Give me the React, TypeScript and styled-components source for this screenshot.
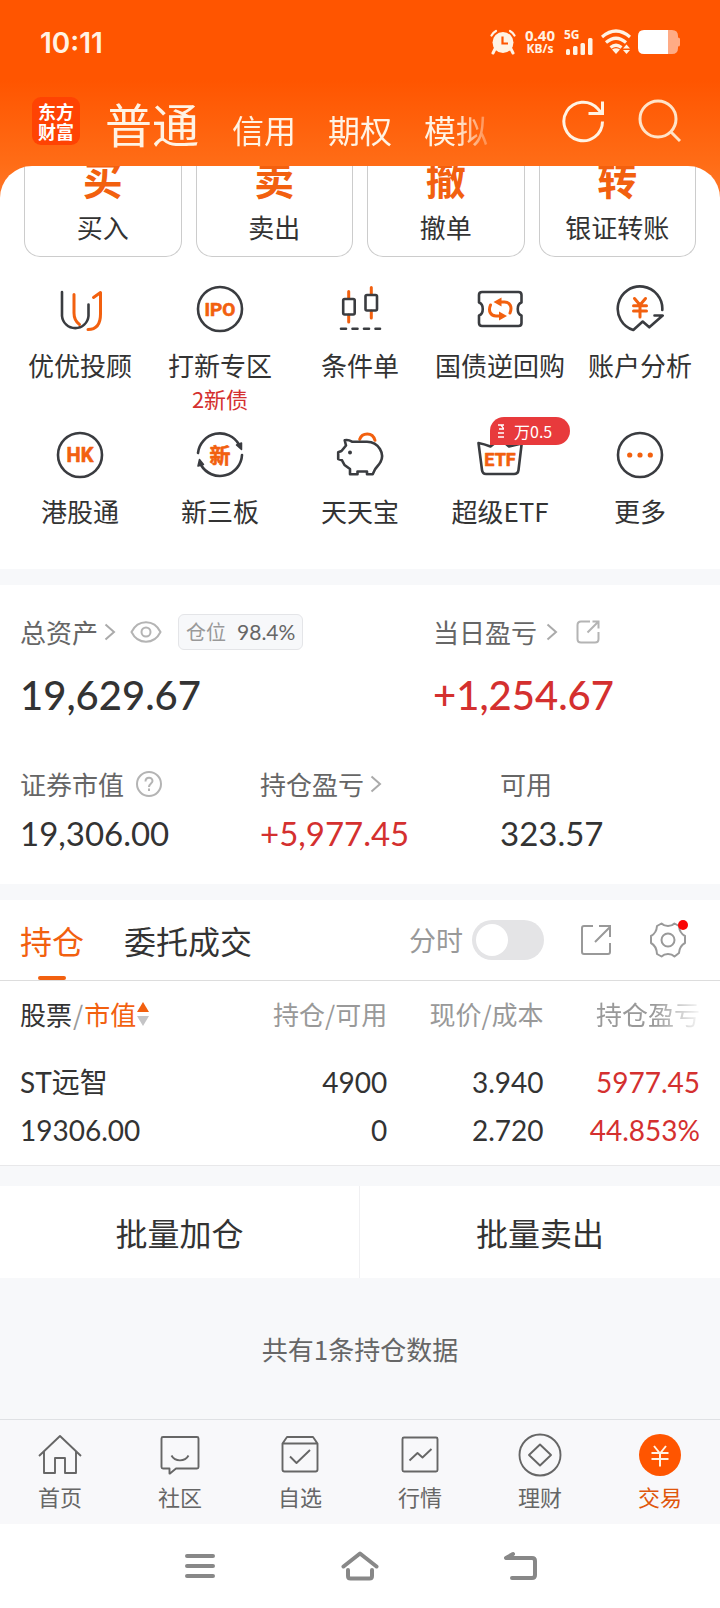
import React from "react";
import styled, { createGlobalStyle } from "styled-components";

const CJK = `"Noto Sans CJK SC", "Noto Sans", sans-serif`;
const NUM = `Lato, "Noto Sans CJK SC", sans-serif`;
const ORANGE = "#f2600f";
const RED = "#d4302f";
const INK = "#333333";
const GREY = "#666666";
const SOFT = "#999999";
const BAND = "#f7f8fa";

const Global = createGlobalStyle`
  * { box-sizing: border-box; }
  body { margin: 0; background: #fff; color: ${INK}; font-family: ${CJK}; }
  button { border: 0; padding: 0; background: none; color: inherit; font: inherit; }
  a { color: inherit; text-decoration: none; }
  svg { display: block; flex: none; }
  h1, h2, p, dl, dd, dt { margin: 0; font-weight: 400; }
`;

const Page = styled.div`
  display: flex;
  flex-direction: column;
  width: 100%;
`;

/* ---------- header ---------- */

const Header = styled.header`
  background: linear-gradient(#ff5500 0, #ff5500 80px, #ff6d17 166px);
  color: #fff3e4;
`;

const StatusBar = styled.div`
  display: flex;
  align-items: center;
  height: 84px;
  padding: 0 40px 0 40px;
`;

const Clock = styled.time`
  flex: 1;
  padding-top: 2px;
  font: 600 28px/36px Inter, sans-serif;
`;

const StatusIcons = styled.div`
  display: flex;
  align-items: center;
  gap: 7px;
`;

const NetSpeed = styled.div`
  display: flex;
  flex-direction: column;
  align-items: center;
  margin: 0 2px;
  font: 700 15px/14px "Noto Sans", sans-serif;
  small { font-size: 12px; line-height: 14px; }
`;

const SignalBox = styled.div`
  width: 30px;
  height: 26px;
  font: 700 12px/12px "Noto Sans", sans-serif;
  position: relative;
  svg { position: absolute; left: 0; bottom: 0; }
`;

const NavRow = styled.div`
  display: flex;
  align-items: center;
  height: 82px;
  padding: 0 39px 8px 32px;
`;

const Logo = styled.div`
  width: 48px;
  height: 48px;
  padding-top: 4px;
  border-radius: 9px;
  background: #ff4303;
  color: #fff;
  text-align: center;
  font: 700 18px/20px ${CJK};
`;

const AccountTabs = styled.nav`
  flex: 1;
  display: flex;
  align-items: flex-end;
  gap: 32px;
  margin-left: 25px;
  padding-top: 3px;
  mask-image: linear-gradient(90deg, #000 350px, transparent 396px);
`;

const AccountTab = styled.button<{ $active?: boolean }>`
  margin-right: ${(p) => (p.$active ? 1 : 0)}px;
  font-size: ${(p) => (p.$active ? 47 : 32)}px;
  line-height: ${(p) => (p.$active ? 60 : 48)}px;
  white-space: nowrap;
`;

const HeaderActions = styled.div`
  display: flex;
  gap: 32px;
`;

/* ---------- shortcuts ---------- */

const PanelBack = styled.div`
  background: linear-gradient(#ff6d17 0, #ff7a2e 40px, #fff 41px);
`;

const Panel = styled.section`
  border-radius: 32px 32px 0 0;
  overflow: hidden;
  background: #fff;
  padding-bottom: 9px;
`;

const Cards = styled.div`
  display: grid;
  grid-template-columns: repeat(4, 1fr);
  gap: 14px;
  padding: 0 24px;
`;

const Card = styled.button`
  display: flex;
  flex-direction: column;
  justify-content: flex-end;
  align-items: center;
  height: 91px;
  padding-bottom: 11px;
  overflow: hidden;
  border: 1px solid #cccccc;
  border-top: 0;
  border-radius: 0 0 16px 16px;
`;

const CardGlyph = styled.span`
  flex: none;
  margin-bottom: 7px;
  color: ${ORANGE};
  font-weight: 700;
  font-size: 40px;
  line-height: 48px;
`;

const Label = styled.span`
  flex: none;
  font-size: 26px;
  line-height: 36px;
  white-space: nowrap;
`;

const Shortcuts = styled.div`
  display: grid;
  grid-template-columns: repeat(5, 1fr);
  row-gap: 17px;
  padding: 28px 10px 0;
`;

const Shortcut = styled.button`
  position: relative;
  display: flex;
  flex-direction: column;
  align-items: center;
  min-height: 129px;
  ${Label} { margin-top: 14px; }
`;

const Note = styled.span`
  color: ${RED};
  font-size: 22px;
  line-height: 30px;
`;

const Promo = styled.span`
  position: absolute;
  left: 60px;
  top: -14px;
  display: flex;
  align-items: center;
  gap: 10px;
  width: 80px;
  height: 28px;
  padding-left: 8px;
  border-radius: 14px 14px 14px 0;
  background: #e83a3c;
  color: #fff;
  font: 400 16px/28px ${CJK};
`;

/* ---------- assets ---------- */

const Band = styled.div<{ $h: number }>`
  height: ${(p) => p.$h}px;
  background: ${BAND};
`;

const Assets = styled.section`
  padding: 29px 0 31px 20px;
`;

const Row = styled.dl<{ $cols: string; $top?: number }>`
  display: grid;
  grid-template-columns: ${(p) => p.$cols};
  margin-top: ${(p) => p.$top ?? 0}px;
`;

const Caption = styled.dt`
  display: flex;
  align-items: center;
  color: ${GREY};
  font-size: 26px;
  line-height: 36px;
  white-space: nowrap;
`;

const IconButton = styled.button<{ $gap?: number }>`
  margin-left: ${(p) => p.$gap ?? 0}px;
`;

const Ratio = styled.span`
  display: flex;
  gap: 11px;
  height: 36px;
  margin-left: 16px;
  padding: 0 7px;
  border: 1px solid #e4e5e8;
  border-radius: 6px;
  background: ${BAND};
  color: ${SOFT};
  font-size: 20px;
  line-height: 34px;
  b { color: ${GREY}; font: 400 21px/34px ${NUM}; }
`;

const Amount = styled.dd<{ $big?: boolean; $up?: boolean }>`
  margin-top: ${(p) => (p.$big ? 21 : 11)}px;
  color: ${(p) => (p.$up ? RED : INK)};
  font-family: ${NUM};
  font-weight: ${(p) => (p.$big ? 500 : 400)};
  font-size: ${(p) => (p.$big ? 40 : 33)}px;
  line-height: ${(p) => (p.$big ? 48 : 40)}px;
`;

/* ---------- holdings ---------- */

const TabsBar = styled.div`
  display: flex;
  align-items: center;
  height: 81px;
  padding: 0 30px 0 20px;
  border-bottom: 1px solid #dddddd;
`;

const HoldTab = styled.button<{ $active?: boolean }>`
  position: relative;
  height: 80px;
  margin-right: 40px;
  color: ${(p) => (p.$active ? ORANGE : INK)};
  font-size: 32px;
  line-height: 78px;
  &::after {
    content: "";
    display: ${(p) => (p.$active ? "block" : "none")};
    position: absolute;
    left: 50%;
    bottom: 0;
    width: 28px;
    height: 4px;
    margin-left: -14px;
    border-radius: 2px;
    background: ${ORANGE};
  }
`;

const Tools = styled.div`
  flex: 1;
  display: flex;
  justify-content: flex-end;
  align-items: center;
`;

const SwitchLabel = styled.label`
  display: flex;
  align-items: center;
  gap: 9px;
  color: ${SOFT};
  font-size: 27px;
  line-height: 40px;
`;

const Switch = styled.input`
  appearance: none;
  width: 72px;
  height: 40px;
  margin: 0;
  padding: 4px;
  border-radius: 20px;
  background: #e4e4e6;
  &::before {
    content: "";
    display: block;
    width: 32px;
    height: 32px;
    border-radius: 50%;
    background: #fff;
  }
  &:checked { background: ${ORANGE}; }
  &:checked::before { margin-left: 32px; }
`;

const TableWrap = styled.div`
  padding: 0 20px 11px;
  border-bottom: 1px solid #e8e8ea;
`;

const Table = styled.table`
  width: 100%;
  table-layout: fixed;
  border-collapse: collapse;
`;

const Th = styled.th<{ $fade?: boolean }>`
  padding: 0;
  height: 65px;
  color: ${SOFT};
  font-weight: 400;
  font-size: 26px;
  line-height: 36px;
  text-align: right;
  white-space: nowrap;
  &:first-child { text-align: left; }
  mask-image: ${(p) => (p.$fade ? "linear-gradient(90deg, #000 110px, transparent 160px)" : "none")};
`;

const Sort = styled.button`
  display: flex;
  align-items: center;
  gap: 1px;
  color: ${SOFT};
  em { font-style: normal; color: ${INK}; }
  strong { font-weight: 400; color: ${ORANGE}; }
`;

const Td = styled.td<{ $up?: boolean; $first?: boolean }>`
  padding: ${(p) => (p.$first ? 12 : 0)}px 0 0;
  color: ${(p) => (p.$up ? RED : INK)};
  font-family: ${NUM};
  font-size: 28px;
  line-height: 48px;
  text-align: right;
  white-space: nowrap;
  &:first-child { text-align: left; }
`;

const Batch = styled.div`
  display: grid;
  grid-template-columns: 1fr 1fr;
`;

const BatchButton = styled.button`
  height: 92px;
  font-size: 32px;
  line-height: 92px;
  &:first-child { border-right: 1px solid #f0f0f2; }
`;

const Summary = styled.p`
  background: ${BAND};
  color: ${GREY};
  text-align: center;
  font-size: 26px;
  line-height: 141px;
`;

/* ---------- bottom bars ---------- */

const TabBar = styled.nav`
  display: grid;
  grid-template-columns: repeat(6, 1fr);
  height: 105px;
  padding-top: 13px;
  border-top: 1px solid #dfe1e4;
  background: #f8f8fa;
`;

const TabLink = styled.a<{ $active?: boolean }>`
  display: flex;
  flex-direction: column;
  align-items: center;
  color: ${(p) => (p.$active ? "#e0560c" : GREY)};
  font-size: 22px;
  line-height: 30px;
  svg { margin-bottom: 4px; }
`;

const SystemNav = styled.nav`
  display: grid;
  grid-template-columns: repeat(3, 160px);
  justify-content: center;
  height: 84px;
  button { display: flex; justify-content: center; align-items: center; }
`;

/* ---------- icons ---------- */

const Chevron = () => (
  <svg width="12" height="18" viewBox="0 0 12 18" fill="none" stroke="#aaa" strokeWidth="2">
    <path d="M1.5 1.5L10 9L1.5 16.5" />
  </svg>
);

const Tile = ({ children }: { children: React.ReactNode }) => (
  <svg width="48" height="48" viewBox="0 0 48 48" fill="none" stroke="#3a3c40" strokeWidth="2.6" strokeLinecap="round" strokeLinejoin="round">
    {children}
  </svg>
);

const GlyphText = ({ size, y, children }: { size: number; y: number; children: string }) => (
  <text x="24" y={y} textAnchor="middle" fill={ORANGE} stroke={ORANGE} strokeWidth="0.6" fontSize={size} fontWeight="700" fontFamily='Roboto, "Noto Sans CJK SC", sans-serif'>
    {children}
  </text>
);

const tiles: Record<string, React.ReactNode> = {
  advisor: (
    <>
      <path d="M6 7V31A13.3 13.3 0 0 0 32.5 31V19.500" />
      <g stroke={ORANGE} strokeWidth="3">
        <path d="M18 9.500V28C18 33 20 37 23.500 39.500" />
        <path d="M37.500 12.500L44.500 7.500V29C44.500 39 41 44.500 32 44.500" />
      </g>
    </>
  ),
  ipo: (
    <>
      <circle cx="24" cy="24" r="22" />
      <GlyphText size={19} y={31}>IPO</GlyphText>
    </>
  ),
  candles: (
    <>
      <path stroke={ORANGE} strokeWidth="3" d="M12.700 6.500V13M12.700 30V37M35.300 2.500V9M35.300 26V33" />
      <rect x="7.200" y="14" width="11.500" height="15.500" rx="1.500" />
      <rect x="29.500" y="10" width="11.500" height="15.500" rx="1.500" />
      <path d="M5 43.700H10M16.500 43.700H21.500M28 43.700H33M39.500 43.700H44" />
    </>
  ),
  bond: (
    <>
      <path d="M6 7H42.500Q45.500 7 45.500 10V17.500C40.500 19 40.500 29 45.500 30.500V38Q45.500 41 42.500 41H6Q3 41 3 38V30.500C8 29 8 19 3 17.500V10Q3 7 6 7Z" />
      <path stroke={ORANGE} strokeWidth="3" d="M24 17H28.500C34 17 36.500 22 34 28M14.500 20C12 26 14.500 31 20 31H24.500" />
      <path stroke="none" fill={ORANGE} d="M17.500 17L25.500 12.500V21.500ZM31 31L23 26.500V35.500Z" />
    </>
  ),
  analysis: (
    <>
      <path d="M46.300 25A22.300 22.300 0 1 0 17.300 45L26.700 36.500L33.300 42.300L46.700 30.500H38.500" />
      <path stroke={ORANGE} strokeWidth="3" d="M18.500 13.500L24 20L29.500 13.500M24 20V32M17.500 20.700H30.500M17.500 26H30.500" />
    </>
  ),
  hk: (
    <>
      <circle cx="24" cy="24" r="22" />
      <GlyphText size={20} y={31}>HK</GlyphText>
    </>
  ),
  otc: (
    <>
      <path d="M2 22A22 22 0 0 1 43 13.500M46 24A22 22 0 0 1 5 34" />
      <path strokeWidth="1.500" fill="#3a3c40" d="M40.500 14L45.500 12V18.500ZM2 35L3.500 28.500L7.500 33.500Z" />
      <GlyphText size={21} y={32}>新</GlyphText>
    </>
  ),
  piggy: (
    <>
      <path stroke={ORANGE} strokeWidth="3" d="M23.700 8.300C26 1.500 36.500 0.500 39 9.300" />
      <path d="M8.700 9.300C11.500 8.500 14 9.500 16 10.700H31C43 11 49 23 44.500 31C43 34 40 36.500 38.700 39L36.700 43.300H31V40.500H21.500V43.300H14V38L8.500 34L6 29.300L2.200 28V21.200L5.500 20L10 14.500Z" />
      <circle cx="14" cy="21.500" r="2" fill="#3a3c40" stroke="none" />
    </>
  ),
  etf: (
    <>
      <path d="M2.500 12Q8 13 14.500 15.500L24 8L33 15.500L45.700 12.500L42.500 39Q42 43 38 43H10Q6.500 43 6 39Z" />
      <GlyphText size={18} y={35}>ETF</GlyphText>
    </>
  ),
  more: (
    <>
      <circle cx="24" cy="24" r="22" />
      <g stroke="none" fill={ORANGE}>
        <circle cx="13.700" cy="24" r="2.600" />
        <circle cx="24" cy="24" r="2.600" />
        <circle cx="34.300" cy="24" r="2.600" />
      </g>
    </>
  ),
};

const NavIcon = ({ children }: { children: React.ReactNode }) => (
  <svg width="44" height="44" viewBox="0 0 44 44" fill="none" stroke="#666" strokeWidth="1.900" strokeLinejoin="round">
    {children}
  </svg>
);

/* ---------- data ---------- */

const cards = [
  ["买", "买入"],
  ["卖", "卖出"],
  ["撤", "撤单"],
  ["转", "银证转账"],
];

const shortcuts: { icon: string; label: string; note?: string; promo?: string }[] = [
  { icon: "advisor", label: "优优投顾" },
  { icon: "ipo", label: "打新专区", note: "2新债" },
  { icon: "candles", label: "条件单" },
  { icon: "bond", label: "国债逆回购" },
  { icon: "analysis", label: "账户分析" },
  { icon: "hk", label: "港股通" },
  { icon: "otc", label: "新三板" },
  { icon: "piggy", label: "天天宝" },
  { icon: "etf", label: "超级ETF", promo: "万0.5" },
  { icon: "more", label: "更多" },
];

const tabs: { label: string; icon: React.ReactNode; active?: boolean }[] = [
  { label: "首页", icon: <path d="M1 23L22 3L43 23M6 18.500V40H17V25H27V40H38V18.500" /> },
  {
    label: "社区",
    icon: (
      <>
        <path d="M5 4H39Q40.500 4 40.500 5.500V34Q40.500 35.500 39 35.500H18L12 40.500H11.500V35.500H5Q3.500 35.500 3.500 34V5.500Q3.500 4 5 4Z" />
        <path d="M13.500 22.500C17 29 27 29 30.500 22.500" />
      </>
    ),
  },
  {
    label: "自选",
    icon: (
      <>
        <path d="M4.500 10.500L9 4H35L39.500 10.500V36.500Q39.500 38.500 37.500 38.500H6.500Q4.500 38.500 4.500 36.500ZM4.500 10.500H39.500" />
        <path d="M12 23.500L18.500 30L32 17" />
      </>
    ),
  },
  {
    label: "行情",
    icon: (
      <>
        <rect x="4.500" y="4.500" width="35" height="34" rx="1.500" />
        <path d="M11.500 27.500L19.500 20L24.500 24.500L33.500 16" />
      </>
    ),
  },
  {
    label: "理财",
    icon: (
      <>
        <circle cx="22" cy="22" r="20.500" />
        <path d="M22 11.500L33 22L22 32.500L11 22Z" />
      </>
    ),
  },
  {
    label: "交易",
    active: true,
    icon: (
      <>
        <circle cx="22" cy="22" r="21" fill="#ff5500" stroke="none" />
        <path stroke="#fff3e4" strokeWidth="2" d="M16 13L22 20.500L28 13M22 20.500V33.500M13.500 20H30.500M13.500 26H30.500" />
      </>
    ),
  },
];

const holding = [
  ["ST远智", "4900", "3.940", "5977.45"],
  ["19306.00", "0", "2.720", "44.853%"],
];

export default function App() {
  return (
    <Page>
      <Global />
      <Header>
        <StatusBar>
          <Clock>10:11</Clock>
          <StatusIcons>
            <svg width="26" height="26" viewBox="0 0 26 26">
              <circle cx="13" cy="13.500" r="10.500" fill="#fff3e4" />
              <path d="M5 20L3 24M21 20L23 24" stroke="#fff3e4" strokeWidth="3" strokeLinecap="round" />
              <path d="M1.500 6.500Q3 3.500 6 2M24.500 6.500Q23 3.500 20 2" fill="none" stroke="#fff3e4" strokeWidth="2.200" strokeLinecap="round" />
              <path d="M12.500 7.500V14.500H18" fill="none" stroke="#ff5500" strokeWidth="2.200" />
            </svg>
            <NetSpeed>
              <span>0.40</span>
              <small>KB/s</small>
            </NetSpeed>
            <SignalBox>
              5G
              <svg width="30" height="18" viewBox="0 0 30 18" fill="#fff3e4">
                <rect x="2" y="12" width="4" height="6" rx="1.500" />
                <rect x="9" y="9" width="4.500" height="9" rx="1.500" />
                <rect x="16.500" y="6" width="4.500" height="12" rx="1.500" />
                <rect x="24" y="1" width="4.500" height="17" rx="1.500" />
              </svg>
            </SignalBox>
            <svg width="30" height="26" viewBox="0 0 30 26" fill="none" stroke="#fff3e4" strokeWidth="3.200">
              <path d="M1 8Q15 -4 29 8M5 13.500Q15 5 25 13.500M9.500 18.500Q15 14 20.500 18.500" />
              <path stroke="none" fill="#fff3e4" d="M11 20.500Q15 18 19 20.500L15 25ZM22 19.500L25.500 15.500L29 19.500ZM22 21L25.500 25L29 21Z" />
            </svg>
            <svg width="42" height="26" viewBox="0 0 42 26">
              <path fill="#ffab85" d="M30 1H34Q40 1 40 7V8.500Q42 8.500 42 10V16Q42 17.500 40 17.500V19Q40 25 34 25H30Z" />
              <path fill="#fff" d="M6 1H30V25H6Q0 25 0 19V7Q0 1 6 1Z" />
            </svg>
          </StatusIcons>
        </StatusBar>
        <NavRow>
          <Logo>东方<br />财富</Logo>
          <AccountTabs>
            <AccountTab $active>普通</AccountTab>
            <AccountTab>信用</AccountTab>
            <AccountTab>期权</AccountTab>
            <AccountTab>模拟</AccountTab>
          </AccountTabs>
          <HeaderActions>
            <button aria-label="刷新">
              <svg width="44" height="44" viewBox="0 0 44 44" fill="none" stroke="#fff3e4" strokeWidth="3">
                <path d="M41.500 22.500A19.300 19.300 0 1 1 36.500 9.500L40 13.500M41.500 2.500V14.500H27.500" />
              </svg>
            </button>
            <button aria-label="搜索">
              <svg width="44" height="44" viewBox="0 0 44 44" fill="none" stroke="#ffe3c8" strokeWidth="3">
                <circle cx="21" cy="20" r="18" />
                <path d="M33.500 32.500L43 42" />
              </svg>
            </button>
          </HeaderActions>
        </NavRow>
      </Header>

      <PanelBack>
        <Panel>
          <Cards>
            {cards.map(([glyph, label]) => (
              <Card key={label}>
                <CardGlyph>{glyph}</CardGlyph>
                <Label>{label}</Label>
              </Card>
            ))}
          </Cards>
          <Shortcuts>
            {shortcuts.map((s) => (
              <Shortcut key={s.label}>
                <Tile>{tiles[s.icon]}</Tile>
                <Label>{s.label}</Label>
                {s.note && <Note>{s.note}</Note>}
                {s.promo && (
                  <Promo>
                    <svg width="6" height="14" viewBox="0 0 6 14" fill="none" stroke="#fff" strokeWidth="1.300">
                      <path d="M0 1H6M1 5H6M3 1L6 5M0 9H6M0 13H6" />
                    </svg>
                    <span>{s.promo}</span>
                  </Promo>
                )}
              </Shortcut>
            ))}
          </Shortcuts>
        </Panel>
      </PanelBack>

      <Band $h={16} />

      <Assets>
        <Row $cols="413fr 287fr">
          <div>
            <Caption>
              总资产
              <IconButton $gap={6} aria-label="总资产详情"><Chevron /></IconButton>
              <IconButton $gap={14} aria-label="隐藏金额">
                <svg width="32" height="22" viewBox="0 0 32 22" fill="none" stroke="#b4b4b4" strokeWidth="2">
                  <path d="M1.500 11C8 -2 24 -2 30.500 11C24 24 8 24 1.500 11Z" />
                  <circle cx="16" cy="11" r="4.500" />
                </svg>
              </IconButton>
              <Ratio>仓位 <b>98.4%</b></Ratio>
            </Caption>
            <Amount $big>19,629.67</Amount>
          </div>
          <div>
            <Caption>
              当日盈亏
              <IconButton $gap={9} aria-label="当日盈亏详情"><Chevron /></IconButton>
              <IconButton $gap={18} aria-label="分享">
                <svg width="24" height="24" viewBox="0 0 24 24" fill="none" stroke="#b4b4b4" strokeWidth="2">
                  <path d="M14 1.500H5Q1.500 1.500 1.500 5V19Q1.500 22.500 5 22.500H19Q22.500 22.500 22.500 19V12M11.500 12.500L22 2M16.500 1.500H22.500V8.500" />
                </svg>
              </IconButton>
            </Caption>
            <Amount $big $up>+1,254.67</Amount>
          </div>
        </Row>
        <Row $cols="240fr 240fr 220fr" $top={47}>
          <div>
            <Caption>
              证券市值
              <IconButton $gap={12} aria-label="说明">
                <svg width="26" height="26" viewBox="0 0 26 26" fill="none" stroke="#b4b4b4" strokeWidth="2">
                  <circle cx="13" cy="13" r="12" />
                  <path d="M9.500 10.500C9.500 5.500 16.500 5.500 16.500 10C16.500 12.500 13 12.500 13 16M13 17.500V20" />
                </svg>
              </IconButton>
            </Caption>
            <Amount>19,306.00</Amount>
          </div>
          <div>
            <Caption>
              持仓盈亏
              <IconButton $gap={6} aria-label="持仓盈亏详情"><Chevron /></IconButton>
            </Caption>
            <Amount $up>+5,977.45</Amount>
          </div>
          <div>
            <Caption>可用</Caption>
            <Amount>323.57</Amount>
          </div>
        </Row>
      </Assets>

      <Band $h={16} />

      <section>
        <TabsBar>
          <HoldTab $active>持仓</HoldTab>
          <HoldTab>委托成交</HoldTab>
          <Tools>
            <SwitchLabel>
              分时
              <Switch type="checkbox" />
            </SwitchLabel>
            <IconButton $gap={36} aria-label="分享持仓">
              <svg width="32" height="32" viewBox="0 0 32 32" fill="none" stroke="#999" strokeWidth="2">
                <path d="M13 2H4Q2 2 2 4V28Q2 30 4 30H28Q30 30 30 28V19M15 18L30 3M19 2H30V13" />
              </svg>
            </IconButton>
            <IconButton $gap={36} aria-label="设置">
              <svg width="42" height="42" viewBox="0 0 42 42" fill="none" stroke="#999" strokeWidth="2" strokeLinejoin="round">
                <path d="M13.500 4.500Q16 7 20 7T26.500 4.500L31 7Q31.500 14 37 17V24Q31.500 27 31 34L26.500 37.500Q24 35 20 35T13.500 37.500L9 35Q8.500 27 3 24V17Q8.500 14 9 7Z" />
                <circle cx="20" cy="21" r="6.500" />
                <circle cx="35" cy="6" r="5" fill="#fa0505" stroke="none" />
              </svg>
            </IconButton>
          </Tools>
        </TabsBar>
        <TableWrap>
          <Table>
            <colgroup>
              <col width="31%" />
              <col width="23%" />
              <col width="23%" />
              <col width="23%" />
            </colgroup>
            <thead>
              <tr>
                <Th>
                  <Sort>
                    <em>股票</em>/<strong>市值</strong>
                    <svg width="12" height="24" viewBox="0 0 12 24">
                      <path fill={ORANGE} d="M6 0L12 10H0Z" />
                      <path fill="#c4c4c6" d="M0 14H12L6 24Z" />
                    </svg>
                  </Sort>
                </Th>
                <Th>持仓/可用</Th>
                <Th>现价/成本</Th>
                <Th $fade>持仓盈亏</Th>
              </tr>
            </thead>
            <tbody>
              {holding.map((line, i) => (
                <tr key={i}>
                  {line.map((v, j) => (
                    <Td key={j} $first={i === 0} $up={j === 3}>{v}</Td>
                  ))}
                </tr>
              ))}
            </tbody>
          </Table>
        </TableWrap>
      </section>

      <Band $h={20} />

      <Batch>
        <BatchButton>批量加仓</BatchButton>
        <BatchButton>批量卖出</BatchButton>
      </Batch>

      <Summary>共有1条持仓数据</Summary>

      <TabBar>
        {tabs.map((t) => (
          <TabLink key={t.label} href="#" $active={t.active}>
            <NavIcon>{t.icon}</NavIcon>
            {t.label}
          </TabLink>
        ))}
      </TabBar>

      <SystemNav>
        <button aria-label="最近任务">
          <svg width="30" height="26" viewBox="0 0 30 26" stroke="#888" strokeWidth="4" strokeLinecap="round">
            <path d="M2 3H28M2 13H28M2 23H28" />
          </svg>
        </button>
        <button aria-label="主屏幕">
          <svg width="38" height="30" viewBox="0 0 38 30" fill="none" stroke="#888" strokeWidth="4" strokeLinecap="round" strokeLinejoin="round">
            <path d="M2.500 15.500L19 2.500L35.500 15.500M7 19V25Q7 27.500 9.500 27.500H28.500Q31 27.500 31 25V19" />
          </svg>
        </button>
        <button aria-label="返回">
          <svg width="34" height="30" viewBox="0 0 34 30" fill="none" stroke="#888" strokeWidth="4" strokeLinecap="round" strokeLinejoin="round">
            <path d="M10 3L3 7H29Q32 7 32 10V24Q32 27 29 27H9" />
          </svg>
        </button>
      </SystemNav>
    </Page>
  );
}
